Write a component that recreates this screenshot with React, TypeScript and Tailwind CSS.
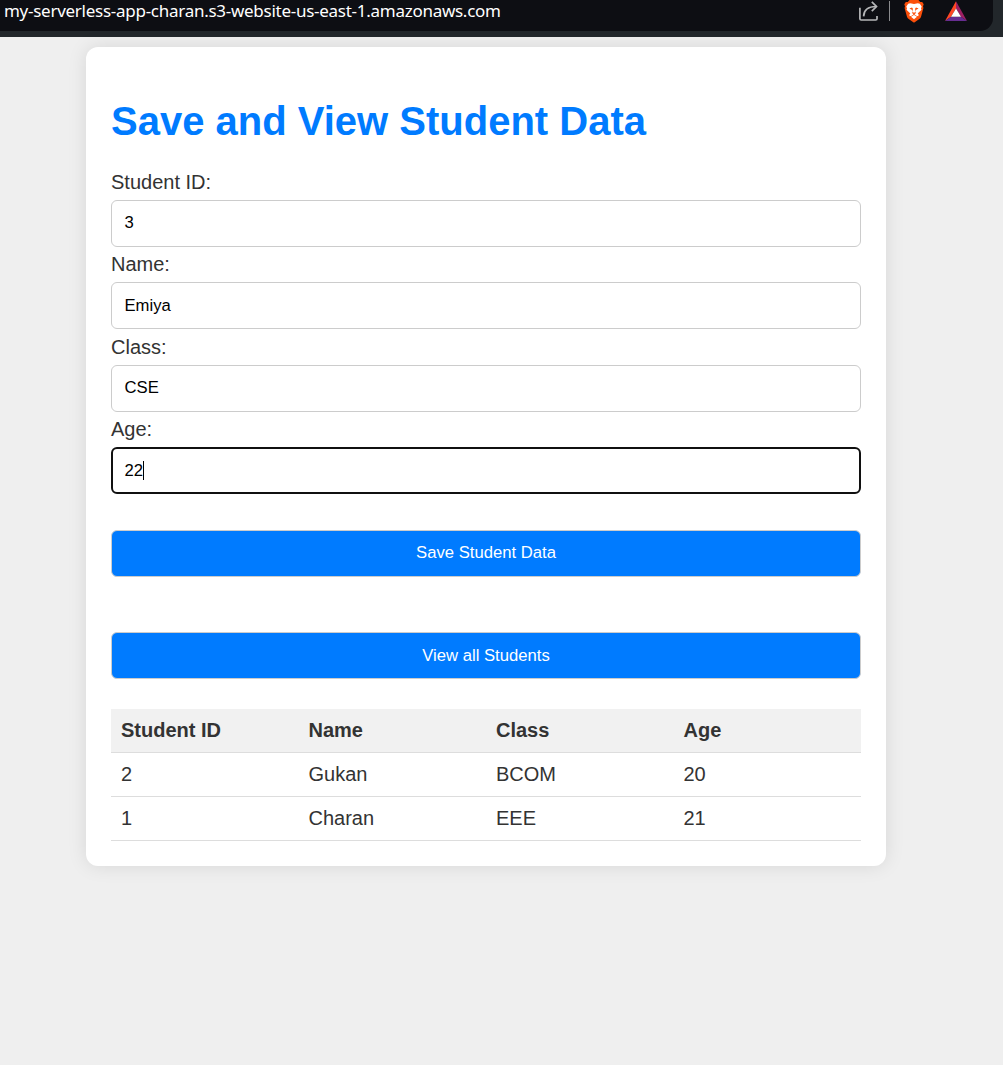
const fields = [
  { label: 'Student ID:', value: '3', height: 'h-[35px]', inset: 'pb-[2px]' },
  { label: 'Name:', value: 'Emiya', height: 'h-[35px]', inset: 'pb-0' },
  { label: 'Class:', value: 'CSE', height: 'h-[36px]', inset: 'pb-[2px]' },
  { label: 'Age:', value: '22', height: 'h-[35px]', inset: 'pb-0', focused: true },
];

const students = [
  ['2', 'Gukan', 'BCOM', '20'],
  ['1', 'Charan', 'EEE', '21'],
];

function ShareIcon() {
  return (
    <svg width="20" height="22" viewBox="0 0 20 22" fill="none" stroke="#b5b6b8" strokeWidth="1.7">
      <path d="M1.9 7.8V18.8Q1.9 20 3.1 20H17.8Q19 20 19 18.8V16" />
      <path d="M5.6 16.4C5.8 9.8 9.6 6.5 18.2 6.5" />
      <path d="M13.8 1.9L18.5 6.5L13.8 11.2" />
    </svg>
  );
}

function BraveIcon() {
  return (
    <svg width="20" height="24" viewBox="0 0 20 24">
      <path
        fill="#fb4f0a"
        d="M5.5 1H14.5L16.2 3L18.2 2.9L19.7 5.2L19 7.3L19.4 9L17.1 17.6C16.8 18.7 16.2 19.5 15.3 20.1L10.7 23.2C10.2 23.5 9.8 23.5 9.3 23.2L4.7 20.1C3.8 19.5 3.2 18.7 2.9 17.6L.6 9L1 7.3L.3 5.2L1.8 2.9L3.8 3Z"
      />
      <path
        fill="#fff"
        d="M6.2 4.3L10 4.9L13.8 4.3L15.8 4.8L17.7 7.5L17 9.6L17.5 10.8L13.7 14.6L14.7 15.8L14.2 17.2L12.3 16.7L10.6 15.6L10.8 14.7L12.3 13.9L11.3 12.9L11.8 10.9L14.6 9.4L12 8.6L11.2 9.4V13.6H8.8V9.4L8 8.6L5.4 9.4L8.2 10.9L8.7 12.9L7.7 13.9L9.2 14.7L9.4 15.6L7.7 16.7L5.8 17.2L5.3 15.8L6.3 14.6L2.5 10.8L3 9.6L2.3 7.5L4.2 4.8Z"
      />
      <path fill="#fff" d="M10 16L13 17.8L10 20.2L7 17.8Z" />
    </svg>
  );
}

function RewardsIcon() {
  return (
    <svg width="22" height="20" viewBox="0 0 22 20">
      <path fill="#ff4724" d="M11 .3V7.6L6 15.8L0 20Z" />
      <path fill="#9e1f63" d="M11 .3L22 20L16 15.8L11 7.6Z" />
      <path fill="#662d91" d="M0 20L6 15.8H16L22 20Z" />
      <path fill="#fff" d="M11 7.6L16 15.8H6Z" />
    </svg>
  );
}

function BrowserBar() {
  return (
    <header className="h-[37px] bg-[#22272b] pr-[10px]">
      <div className="flex h-[31px] items-start rounded-br-[13px] bg-[#0d0e13]">
        <span className="-mt-px block w-[858px] pl-[4px] font-['Noto_Sans'] text-[17px] leading-[24px] tracking-[-0.27px] whitespace-nowrap text-white">
          my-serverless-app-charan.s3-website-us-east-1.amazonaws.com
        </span>
        <ShareIcon />
        <span className="mt-px ml-[11px] h-5 w-px bg-[#8a8b8e]" />
        <span className="-mt-px ml-[14px]">
          <BraveIcon />
        </span>
        <span className="mt-px ml-[21px]">
          <RewardsIcon />
        </span>
      </div>
    </header>
  );
}

const buttonClass =
  'block h-[47px] w-full rounded-[6px] border border-[#ccc] bg-[#007bff] text-center text-[16.67px] leading-5 text-white';

export default function App() {
  return (
    <div className="h-[1065px] w-[1003px] overflow-hidden bg-[#efefef] font-['Liberation_Sans',sans-serif] text-[20px] text-[#333]">
      <BrowserBar />
      <main className="mt-[10px] ml-[86px] h-[819px] w-[800px] rounded-[12px] bg-white px-[25px] pt-[50px] shadow-[0_0_19px_rgba(0,0,0,0.1)]">
        <h1 className="h-[68px] text-[40px] leading-[48px] font-bold whitespace-nowrap text-[#007bff]">
          Save and View Student Data
        </h1>
        <form>
          {fields.map((f) => (
            <div key={f.label}>
              <label className={`flex items-end pb-[6px] leading-[23px] ${f.height}`}>{f.label}</label>
              <div
                className={`flex h-[47px] items-center rounded-[6px] text-[16.67px] leading-5 text-black ${f.inset} ${
                  f.focused ? 'border-2 border-[#101010] px-[11.5px]' : 'border border-[#ccc] px-[12.5px]'
                }`}
              >
                {f.value}
                {f.focused && <span className="h-[19px] w-px bg-black" />}
              </div>
            </div>
          ))}
          <button type="button" className={`mt-[36px] pb-[2px] ${buttonClass}`}>
            Save Student Data
          </button>
          <button type="button" className={`mt-[55px] pb-0 ${buttonClass}`}>
            View all Students
          </button>
        </form>
        <table className="mt-[30px] w-full table-fixed border-separate border-spacing-0 text-left leading-[23px]">
          <thead className="bg-[#f1f1f1]">
            <tr>
              {['Student ID', 'Name', 'Class', 'Age'].map((h) => (
                <th key={h} className="h-[44px] border-b border-[#ddd] px-[10px] py-0 font-bold">
                  {h}
                </th>
              ))}
            </tr>
          </thead>
          <tbody>
            {students.map((row) => (
              <tr key={row[0]}>
                {row.map((cell) => (
                  <td key={cell} className="h-[44px] border-b border-[#ddd] px-[10px] py-0">
                    {cell}
                  </td>
                ))}
              </tr>
            ))}
          </tbody>
        </table>
      </main>
    </div>
  );
}
